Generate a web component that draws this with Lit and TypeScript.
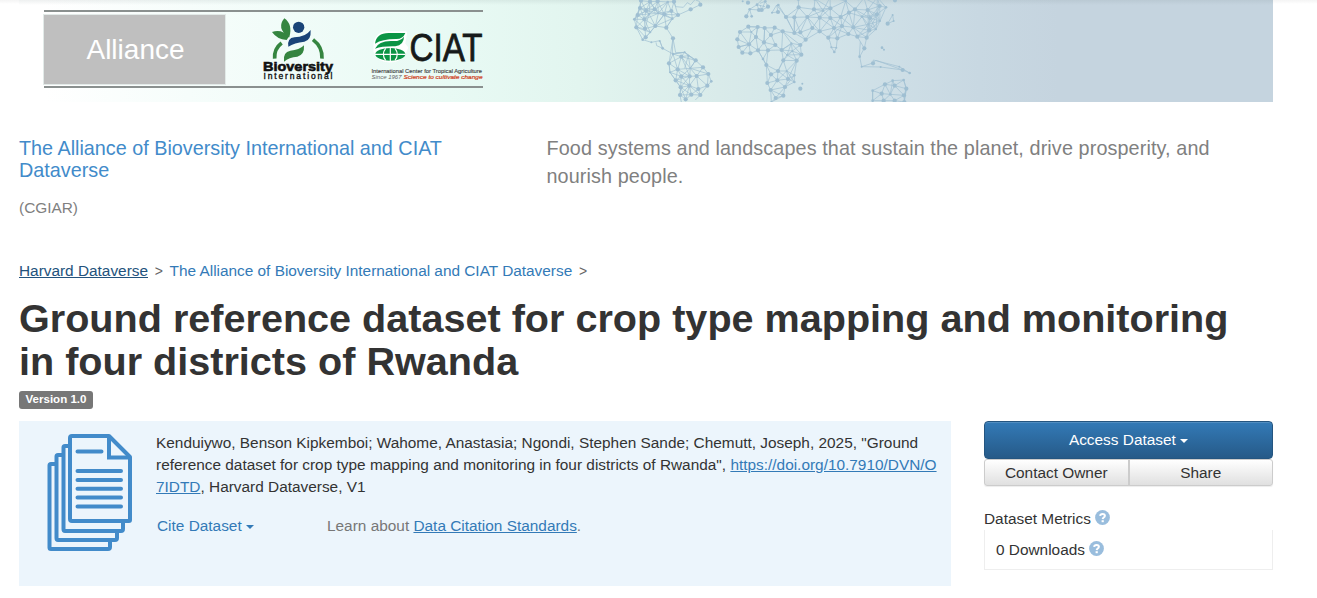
import { html, svg, css, LitElement } from 'lit';
import { customElement } from 'lit/decorators.js';

type Point = [number, number, number?];

interface Landmass {
    x: number;
    reach: number;
    nodes: Point[];
    lines: string;
}

// node and line coordinates are in thirds of a pixel, x is the offset in pixels
const landmasses: Landmass[] = [
    {
        x: 610,
        reach: 46,
        nodes: [
            [93, 2], [120, 5], [143, 4], [90, 24], [108, 32], [134, 28], [83, 45], [73, 58, 4], [103, 58], [117, 42, 3],
            [145, 40, 3], [163, 43], [184, 33], [187, 56, 4], [204, 45], [79, 82], [105, 86], [136, 78], [169, 83],
            [107, 112], [173, 6, 4], [192, 5], [121, 97, 3]
        ],
        lines: 'M163 43L136 78L187 56L169 83L189 115L187 160M204 45L242 28L271 14L268 4L257 0M192 5L197 20L220 22L232 8L242 14L254 0M98 119L107 112M98 119L124 127L149 122L158 145L189 162L224 157L257 181M138 127L140 137L158 145L149 122M189 115L197 158L224 157M79 82L98 119'
    },
    {
        x: 610,
        reach: 45,
        nodes: [
            [189, 162, 4], [214, 170], [177, 190], [257, 181], [235, 167, 3], [224, 157, 3], [203, 208], [241, 205, 3], [279, 202],
            [180, 217, 3], [197, 241], [214, 229], [239, 229], [260, 228], [295, 222], [304, 244, 4], [212, 262],
            [238, 257], [265, 267], [292, 257], [210, 285], [244, 284], [271, 285], [227, 298]
        ],
        lines: 'M189 115L177 190L180 217L197 241L212 262L210 285L214 306M257 181L241 205L295 222M271 285L256 300M189 162L203 208M214 170L239 229M235 167L224 205'
    },
    {
        x: 760,
        reach: 55,
        nodes: [
            [116, 22], [162, 28], [211, 25], [257, 3, 4], [285, 28], [323, 30], [359, 18], [378, 22, 4], [78, 51], [103, 52],
            [142, 51], [179, 53], [189, 32, 4], [211, 54], [242, 51], [267, 38], [306, 50, 4], [330, 54], [351, 43], [157, 84],
            [103, 99], [121, 97], [179, 94], [222, 84], [246, 78], [280, 82], [325, 73, 3], [328, 91], [360, 63, 3], [348, 88, 3],
            [265, 102], [292, 110], [205, 113], [232, 115], [320, 113], [137, 119], [55, 15, 4], [115, -4], [165, -4],
            [210, -8], [312, -6], [352, -8]
        ],
        lines: 'M0 10L15 4L25 20L6 30L0 15M15 4L6 30M36 38L54 36L50 15L36 38M78 51L103 99L142 51M103 52L103 99M50 15L78 51M205 113L211 128L214 142L223 156L229 143L232 115M214 142L229 143M292 110L301 125L313 145L299 170L305 200L339 189L340 180L418 200L449 219L428 210L362 201L305 200M339 189L348 181L428 210M301 125L298 170M313 145L320 113M383 71L401 63L398 45L383 71M365 143L372 149M142 51L179 94'
    },
    {
        x: 760,
        reach: 46,
        nodes: [
            [14, 84], [44, 83], [68, 94], [33, 105], [12, 127], [46, 135], [-6, 151], [24, 151], [65, 150], [94, 130, 3], [121, 135],
            [97, 153, 3], [124, 164], [9, 177, 4], [70, 181], [81, 165, 3], [110, 182], [19, 195], [54, 213], [33, 223], [80, 213, 3], [22, 249],
            [52, 241], [84, 237], [103, 226, 4], [103, 246, 4], [32, 270], [75, 261], [47, 294], [70, 287], [34, 306, 3]
        ],
        lines: 'M68 94L121 135L137 119M65 150L97 130M68 94L65 150M68 94L103 99M110 182L84 237M70 181L54 213M-6 151L9 177L19 195L22 249'
    },
    {
        x: 760,
        reach: 34,
        nodes: [
            [-60, 96], [-35, 80], [-7, 81], [-68, 118], [-64, 141], [-53, 158], [-29, 160], [-33, 133], [-26, 96, 3],
            [-12, 111]
        ],
        lines: 'M-60 96L-26 96L-33 133L-64 141M-68 118L-33 133L-12 111L-7 81M-60 96L-33 133M-33 133L-6 151L-12 111M-35 80L-7 81L14 84L12 127L-12 111M-29 160L-6 151'
    },
    {
        x: 760,
        reach: 44,
        nodes: [
            [338, 272, 4], [375, 253], [398, 242, 4], [404, 257], [365, 281], [391, 283, 4], [432, 286], [439, 266], [431, 240, 4],
            [338, 302, 4], [371, 302], [404, 302], [433, 306]
        ],
        lines: 'M338 272V306M431 240L439 266L432 306'
    }
];

// islands and coast points that only the drawn lines reach
const coast: Point[] = [
    [-41, 49], [-25, 49, 4], [-36, 8], [-52, 4, 3], [-31, 28, 4], [-9, 14, 4], [-3, 30], [5, 30], [24, 20], [16, 4, 4],
    [54, 36], [36, 38, 3], [339, 190], [428, 210], [449, 219, 4], [418, 200, 3], [362, 201, 3], [305, 200, 3], [313, 145],
    [299, 170, 4], [383, 71], [398, 45, 3], [401, 63, 3], [214, 142, 3], [229, 143, 3], [223, 156, 4], [405, 1], [121, 266],
    [127, 251, 3], [366, 143, 4], [372, 149, 3],
    [-261, 115], [-208, 28], [-179, 14], [-352, 119, 4], [-326, 127, 3], [-301, 123, 3], [-292, 145, 4]
];

@customElement('world-network')
class WorldNetwork extends LitElement {
    static styles = css`
        :host, svg {
            display: block;
        }
        .line {
            fill: none;
            stroke: #9fbfd2;
            stroke-width: 2.6;
            opacity: .8;
        }
        .node {
            fill: #9fbfd2;
        }
    `

    links(land: Landmass) {
        let d = land.lines;
        land.nodes.forEach((a, i) => {
            land.nodes.slice(i + 1).forEach((b) => {
                if (Math.hypot(a[0] - b[0], a[1] - b[1]) < land.reach) {
                    d += `M${a[0]} ${a[1]}L${b[0]} ${b[1]}`;
                }
            });
        });
        return d;
    }

    dots(nodes: Point[]) {
        return nodes.map((n) => svg`<circle class="node" cx=${n[0]} cy=${n[1]} r=${n[2] ?? 6.3} />`);
    }

    render() {
        return html`
            <svg width="1254" height="102" viewBox="19 0 1254 102">
                ${landmasses.map((l) => svg`
                    <g transform="translate(${l.x} 0) scale(.3333)">
                        <path class="line" d=${this.links(l)} />
                        ${this.dots(l.nodes)}
                    </g>
                `)}
                <g transform="translate(760 0) scale(.3333)">
                    <path class="line" d="M-41 49L-31 28L-9 14L-3 30L-31 28M-25 49L-31 28M-9 14L5 0M-9 14L15 20" />
                    ${this.dots(coast)}
                </g>
            </svg>
        `;
    }
}

@customElement('brand-strip')
class BrandStrip extends LitElement {
    static styles = css`
        :host {
            display: flex;
            align-items: center;
            box-sizing: border-box;
            width: 439px;
            height: 78px;
            border-top: 2px solid #8a908f;
            border-bottom: 2px solid #8a908f;
        }
        .alliance {
            width: 181px;
            height: 69px;
            line-height: 69px;
            background: #bfbfbf;
            color: #fff;
            font-size: 28px;
            text-align: center;
            text-indent: 2px;
            box-shadow: 0 0 0 1px #e2eae8;
        }
        .logos {
            display: block;
            overflow: visible;
        }
    `

    render() {
        return html`
            <div class="alliance">Alliance</div>
            <svg class="logos" width="258" height="74" viewBox="225 12 258 74" font-family="Liberation Sans, Arial, sans-serif">
                <g transform="translate(240 0) scale(.3333)">
                    <circle cx="176" cy="82" r="17" fill="#1a4478" />
                    <path fill="#1a4478" d="M145 140Q141 114 163 112Q196 112 212 90Q214 121 193 125Q163 128 145 140Z" />
                    <path fill="#358540" d="M132 185Q128 156 151 152Q178 151 192 136Q194 165 172 170Q147 172 132 185Z" />
                    <path fill="#358540" d="M144 110Q109 84 133 55Q159 73 148 112ZM140 120Q111 118 96 96Q126 86 146 111Z" />
                    <path fill="none" stroke="#358540" stroke-width="11" d="M125 129Q102 146 104 176M219 119Q248 141 246 176" />
                </g>
                <text x="263" y="70.700" font-size="13" font-weight="bold" fill="#111" stroke="#111" stroke-width=".6" textLength="70" lengthAdjust="spacingAndGlyphs">Bioversity</text>
                <text x="263.500" y="78.700" font-size="8.500" fill="#111" stroke="#111" stroke-width=".35" textLength="69">International</text>
                <g transform="translate(240 0) scale(.3333)">
                    <path fill="#fff" stroke="#fff" stroke-width="9" stroke-linejoin="round" d="M405 146Q402 101 442 98H497L491 132L500 143Q486 183 449 183Q416 183 405 154Z" />
                    <path fill="#0b9445" d="M405 131Q409 99 446 99H496Q489 118 467 117Q427 117 405 131ZM405 146Q416 122 456 123Q481 125 492 110Q492 135 466 139Q428 138 405 146Z" />
                    <ellipse cx="451" cy="163" rx="45" ry="19" fill="#0b9445" />
                    <path fill="none" stroke="#fff" stroke-width="3.500" d="M405 163H497M451 143V183M437 145Q423 163 437 181M465 145Q479 163 465 181" />
                </g>
                <text x="409.500" y="61.200" font-size="38.500" fill="#161a1a" stroke="#161a1a" stroke-width=".8" textLength="73" lengthAdjust="spacingAndGlyphs">CIAT</text>
                <text x="371.500" y="72.700" font-size="6" fill="#444" stroke="#444" stroke-width=".15" textLength="110.500" lengthAdjust="spacingAndGlyphs">International Center for Tropical Agriculture</text>
                <text x="371.500" y="78.700" font-size="5.500" font-style="italic" fill="#666" textLength="30" lengthAdjust="spacingAndGlyphs">Since 1967</text>
                <text x="403.500" y="78.700" font-size="5.500" font-style="italic" fill="#cf3f1c" stroke="#cf3f1c" stroke-width=".2" textLength="79" lengthAdjust="spacingAndGlyphs">Science to cultivate change</text>
            </svg>
        `;
    }
}

@customElement('app-root')
class AppRoot extends LitElement {
    static styles = css`
        :host {
            display: block;
            box-sizing: border-box;
            height: 598px;
            padding: 0 44px 0 19px;
            overflow: hidden;
            background: linear-gradient(#f4f4f4, #fff 4px);
            color: #333;
            font: 15.4px/22px "Liberation Sans", Arial, sans-serif;
        }
        a {
            color: #337ab7;
            text-decoration: none;
        }
        .underline {
            text-decoration: underline;
        }
        .banner {
            display: grid;
            height: 102px;
            background:
                linear-gradient(rgba(90, 110, 110, .1), transparent 5px),
                linear-gradient(90deg, #fff 25px, #f6fdfb 170px, #e8faf4 430px, #e2f5ef 560px, #d9ebea 700px, #d3e5ea 790px, #c8d8e2 960px, #c5d4df 1040px);
        }
        .banner > * {
            grid-area: 1 / 1;
        }
        brand-strip {
            margin: 10px 0 0 25px;
        }
        .about {
            display: grid;
            grid-template-columns: 480px 1fr;
            column-gap: 47.500px;
            height: 159px;
            padding-top: 35px;
            box-sizing: border-box;
        }
        .name {
            display: block;
            color: #428bca;
            font-size: 19.8px;
            line-height: 22px;
        }
        .affiliation {
            margin-top: 16px;
            color: #808080;
        }
        .tagline {
            margin-top: -3px;
            color: #808080;
            font-size: 19.8px;
            letter-spacing: .11px;
            line-height: 28.3px;
        }
        .crumbs {
            display: flex;
            gap: 6.700px;
            height: 22px;
            line-height: 20px;
        }
        .crumbs > a {
            letter-spacing: -.01px;
        }
        .crumbs .home {
            color: #23527c;
        }
        .sep {
            color: #666;
            font-size: 14px;
        }
        h1 {
            margin: 14px 0 0;
            font-size: 39.6px;
            line-height: 43px;
            font-weight: bold;
        }
        .version {
            display: block;
            width: 74px;
            height: 18px;
            margin-top: 8px;
            border-radius: 3px;
            background: #777;
            color: #fff;
            font-size: 11.55px;
            font-weight: bold;
            line-height: 16px;
            text-align: center;
        }
        .columns {
            display: flex;
            justify-content: space-between;
            margin-top: 12px;
        }
        .citation {
            display: flex;
            box-sizing: border-box;
            width: 932px;
            height: 165px;
            background: #ecf5fc;
        }
        .files {
            flex: none;
            margin: 12px 23px 0 28px;
        }
        .text {
            padding-top: 11px;
            white-space: nowrap;
        }
        .cite {
            display: flex;
            margin-top: 17px;
            color: #777;
        }
        .cite .menu {
            width: 171px;
            padding-left: 1px;
            box-sizing: border-box;
        }
        .caret {
            display: inline-block;
            vertical-align: middle;
            border-top: 4px solid;
            border-left: 4px solid transparent;
            border-right: 4px solid transparent;
        }
        .side {
            width: 289px;
        }
        .access {
            box-sizing: border-box;
            height: 38px;
            border: 1px solid #245580;
            border-radius: 4px;
            background: linear-gradient(#337ab7, #265a88);
            box-shadow: inset 0 1px 0 rgba(255, 255, 255, .15);
            color: #fff;
            line-height: 36px;
            text-align: center;
        }
        .pair {
            display: flex;
            box-sizing: border-box;
            height: 27px;
            border: 1px solid #ccc;
            border-radius: 3px;
            background: linear-gradient(#fff, #e0e0e0);
            box-shadow: 0 1px 1px rgba(0, 0, 0, .075);
            line-height: 25px;
            text-align: center;
        }
        .pair > * {
            flex: 1;
        }
        .pair > * + * {
            border-left: 2px solid #ccc;
        }
        .metrics {
            display: flex;
            align-items: center;
            gap: 4px;
            margin-top: 22px;
        }
        .count {
            display: flex;
            align-items: center;
            gap: 4px;
            box-sizing: border-box;
            height: 40px;
            padding-left: 11px;
            border: 1px solid #eee;
            border-top: none;
        }
        .help {
            margin-bottom: 3px;
        }
    `

    help() {
        return html`
            <svg class="help" width="15" height="15" viewBox="0 0 15 15">
                <circle cx="7.500" cy="7.500" r="7.400" fill="#99bddd" />
                <path d="M5.100 5.900Q5.400 3.900 7.500 3.900Q9.900 3.900 9.900 5.800Q9.900 7 8.600 7.600Q7.800 8 7.700 9.100" fill="none" stroke="#fff" stroke-width="2" />
                <rect x="6.600" y="10.200" width="2.200" height="2" fill="#fff" />
            </svg>
        `;
    }

    files() {
        return html`
            <svg class="files" width="86" height="119" viewBox="0 0 86 119" fill="none" stroke="#428bca" stroke-width="4" stroke-linejoin="round">
                <path d="M9 31H4Q2.500 31 2.500 32.500V114.500Q2.500 116 4 116H61Q63 116 63 114V108" />
                <path d="M16 22H11Q9.500 22 9.500 23.500V105Q9.500 107 11 107H68Q70 107 70 105V99" />
                <path d="M22 13H18Q16.500 13 16.500 14.500V96Q16.500 98 18 98H74Q76 98 76 96V90" />
                <path d="M25 3H62L83 24V87Q83 88 82 88H25Q23 88 23 86V5Q23 3 25 3Z" />
                <path d="M62 3V24.500H83" stroke-linejoin="miter" />
                <path d="M30.500 18.500H54.500M30.500 38H74M30.500 47H74M30.500 55.700H74M30.500 64.500H74M30.500 73.500H74" stroke-linecap="round" />
            </svg>
        `;
    }

    render() {
        return html`
            <div class="banner">
                <world-network></world-network>
                <brand-strip></brand-strip>
            </div>
            <div class="about">
                <div>
                    <a class="name">The Alliance of Bioversity International and CIAT<br>Dataverse</a>
                    <div class="affiliation">(CGIAR)</div>
                </div>
                <div class="tagline">Food systems and landscapes that sustain the planet, drive prosperity, and<br>nourish people.</div>
            </div>
            <div class="crumbs">
                <a class="home underline">Harvard Dataverse</a>
                <span class="sep">&gt;</span>
                <a>The Alliance of Bioversity International and CIAT Dataverse</a>
                <span class="sep">&gt;</span>
            </div>
            <h1>Ground reference dataset for crop type mapping and monitoring<br>in four districts of Rwanda</h1>
            <span class="version">Version 1.0</span>
            <div class="columns">
                <div class="citation">
                    ${this.files()}
                    <div class="text">
                        <div>Kenduiywo, Benson Kipkemboi; Wahome, Anastasia; Ngondi, Stephen Sande; Chemutt, Joseph, 2025, "Ground<br>reference dataset for crop type mapping and monitoring in four districts of Rwanda", <a class="underline">https://doi.org/10.7910/DVN/O<br>7IDTD</a>, Harvard Dataverse, V1</div>
                        <div class="cite">
                            <a class="menu">Cite Dataset <span class="caret"></span></a>
                            <span>Learn about <a class="underline">Data Citation Standards</a>.</span>
                        </div>
                    </div>
                </div>
                <div class="side">
                    <div class="access">Access Dataset <span class="caret"></span></div>
                    <div class="pair"><span>Contact Owner</span><span>Share</span></div>
                    <div class="metrics">Dataset Metrics ${this.help()}</div>
                    <div class="count">0 Downloads ${this.help()}</div>
                </div>
            </div>
        `;
    }
}
